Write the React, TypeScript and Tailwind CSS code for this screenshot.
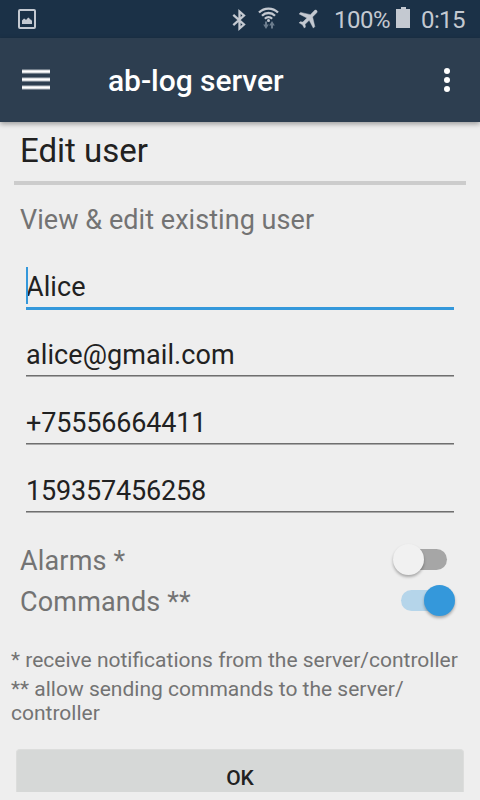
import React from 'react';

function StatusBar() {
  return (
    <div className="relative h-[38px] shrink-0 bg-[#1b3147] text-[#c4c9d1]">
      <svg className="block h-[38px] w-[480px]" viewBox="0 0 480 38" fill="none">
        <rect x="19" y="10" width="16" height="18" rx="1" stroke="#c4c9d1" strokeWidth="2" />
        <path d="M22 24v-3.500l2-2 1 .5 1 1 2-2.200h1l1 1.700h1l1 1.500v3z" fill="#c4c9d1" />
        <path d="M233.300 14.800l10.700 9.700-4.500 4V11.500l4.500 4-10.700 9.700" stroke="#c4c9d1" strokeWidth="2.300" />
        <g stroke="#c4c9d1" strokeWidth="2.300">
          <path d="M259 12.500a13.400 13.400 0 0 1 19 0" />
          <path d="M262 15.700a9.200 9.200 0 0 1 13 0" />
          <path d="M264.900 18.700a5 5 0 0 1 7.200 0" />
        </g>
        <circle cx="268.500" cy="20.500" r="1.500" fill="#c4c9d1" />
        <path d="M266 21.500v5M272 28.500v-5" stroke="#6c7d8e" strokeWidth="2" />
        <path d="M263.200 24.500h5.600l-2.800 4.500zM269.200 25.500h5.600l-2.800-4.500z" fill="#6c7d8e" />
        <path
          transform="translate(309.200 18) rotate(45) scale(1.060) translate(-11.500 -12)"
          d="M21 16v-2l-8-5V3.500c0-.83-.67-1.500-1.500-1.500S10 2.670 10 3.500V9l-8 5v2l8-2.500V19l-2 1.500V22l3.500-1 3.500 1v-1.500L13 19v-5.500l8 2.500z"
          fill="#c4c9d1"
          stroke="#c4c9d1"
          strokeWidth="0.400"
        />
        <path d="M396 9h5V7h5v2h4v19h-14z" fill="#c4c9d1" />
        <text x="334" y="28" fontSize="24" fill="#c4c9d1" textLength="56.500">100%</text>
        <text x="421" y="28" fontSize="24" fill="#c4c9d1" textLength="44.500">0:15</text>
      </svg>
    </div>
  );
}

function MenuBar() {
  return (
    <i className="block border-y border-[#727e8a]">
      <i className="block h-[3px] border-y border-[#dcdfe2] bg-white" />
    </i>
  );
}

function AppBar() {
  return (
    <header className="z-10 flex h-[84px] shrink-0 items-center bg-[#2d3e50] pl-[22px] text-white shadow-[0_2px_5px_rgba(0,0,0,0.35)]">
      <div className="flex w-7 flex-col gap-[3px] pb-px">
        <MenuBar />
        <MenuBar />
        <MenuBar />
      </div>
      <h1 className="ml-[58px] flex-1 pt-px text-[30px] font-medium leading-9 tracking-[-0.05px]">ab-log server</h1>
      <div className="mr-[30px] flex flex-col gap-[3px]">
        <i className="size-1.5 rounded-full bg-white" />
        <i className="size-1.5 rounded-full bg-white" />
        <i className="size-1.5 rounded-full bg-white" />
      </div>
    </header>
  );
}

function Field({ value, focused = false, digits = false }: { value: string; focused?: boolean; digits?: boolean }) {
  return (
    <div className="mx-[26px] h-[68px] shrink-0 pt-4">
      <div className="relative h-9 text-[27px] leading-9 text-[#212121]">
        {focused && <i className="absolute -top-0.5 left-0 h-[37px] w-0.5 bg-[#3498db]" />}
        <span className={digits ? 'tracking-[-0.17px]' : 'tracking-[0.08px]'}>{value}</span>
      </div>
      {focused ? (
        <div className="mt-0.5 h-[3px] bg-[#3498db]" />
      ) : (
        <div className="mt-0.5 h-0.5 border-b border-[#a9a9a9] bg-[#6f6f6f]" />
      )}
    </div>
  );
}

function Toggle({ on }: { on: boolean }) {
  return (
    <div className="flex h-[31px] w-[62px] items-center">
      {on ? (
        <div className="ml-2 flex h-[21px] w-[46px] items-center rounded-full bg-[#b5d5ea]">
          <i className="-mr-2 ml-auto size-[31px] shrink-0 rounded-full bg-[#3498db] shadow-[0_2px_3px_rgba(0,0,0,0.3)]" />
        </div>
      ) : (
        <div className="ml-2 flex h-[21px] w-[46px] items-center rounded-full bg-[#a6a6a6]">
          <i className="-ml-2 size-[31px] shrink-0 rounded-full bg-[#f1f1f1] shadow-[0_2px_3px_rgba(0,0,0,0.3)]" />
        </div>
      )}
    </div>
  );
}

function ToggleRow({ label, on }: { label: string; on: boolean }) {
  return (
    <div className="flex h-[41px] shrink-0 items-center justify-between pl-5 pr-[25px] text-[27px] leading-9">
      <span className="pt-0.5 tracking-[0.16px]">{label}</span>
      <Toggle on={on} />
    </div>
  );
}

export default function App() {
  return (
    <div className="flex h-[800px] w-[480px] flex-col overflow-hidden bg-[#eeeeee] font-['Roboto',sans-serif] text-[#737373]">
      <StatusBar />
      <AppBar />
      <h2 className="h-[59px] shrink-0 pl-5 text-[33px] leading-[57px] text-[#212121]">Edit user</h2>
      <div className="mx-3.5 h-1 shrink-0 bg-[#cccccc]" />
      <p className="h-[68px] shrink-0 pl-5 pt-px text-[27px] leading-[68px] tracking-[0.05px]">
        View &amp; edit existing user
      </p>
      <Field value="Alice" focused />
      <Field value="alice@gmail.com" />
      <Field value="+75556664411" digits />
      <Field value="159357456258" digits />
      <div className="mt-3.5">
        <ToggleRow label="Alarms *" on={false} />
        <ToggleRow label="Commands **" on />
      </div>
      <div className="mt-[27px] px-[11px] text-[21px] leading-6">
        <p>* receive notifications from the server/controller</p>
        <p className="mt-[5px]">
          ** allow sending commands to the server/
          <br />
          controller
        </p>
      </div>
      <div className="mx-4 mt-6 h-[43px] shrink-0 rounded-t-[4px] border border-b-0 border-[#dcdddc] bg-[#d6d8d7] pt-4 text-center text-[21px] font-medium leading-6 text-[#212121]">
        OK
      </div>
    </div>
  );
}
